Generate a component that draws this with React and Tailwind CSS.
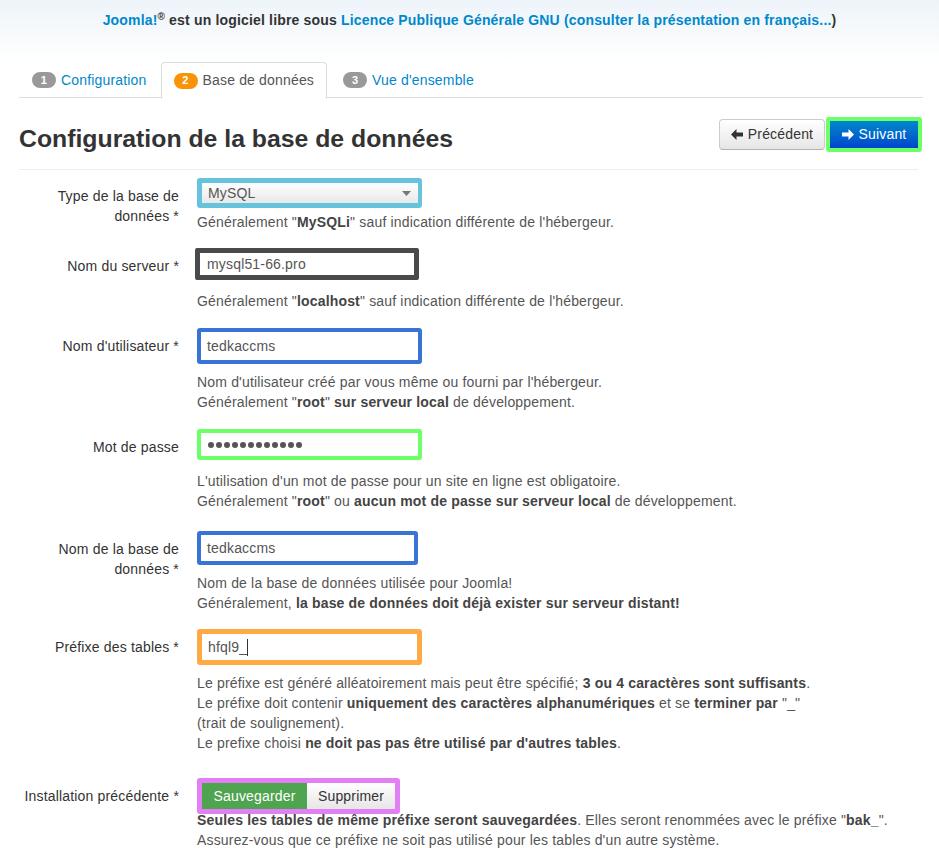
import React from "react";

const Arrow = ({ dir }) => (
  <svg width="12" height="11" viewBox="0 0 12 11" className="inline-block">
    <path
      d={dir === "left" ? "M0 5.5 L5.5 0 V3.5 H12 V7.5 H5.5 V11 Z" : "M12 5.5 L6.5 0 V3.5 H0 V7.5 H6.5 V11 Z"}
      fill="currentColor"
    />
  </svg>
);

function Row({ rowCls, label, children, help, helpCls }) {
  return (
    <div className={"flex " + rowCls}>
      <div className="w-[160px] shrink-0 ml-[19px] text-right leading-[20px] pt-[8px] text-[#333]">{label}</div>
      <div className="ml-[18px] flex-1">
        {children}
        <div className={"text-[#555] leading-[20px] " + helpCls}>{help}</div>
      </div>
    </div>
  );
}

const B = ({ children }) => <b className="font-bold text-[#444]">{children}</b>;

export default function App() {
  return (
    <div className="w-[939px] min-h-[848px] bg-white text-[14px] tracking-[0.17px] font-['Liberation_Sans',Arial,sans-serif] text-[#333] overflow-hidden">
      {/* banner */}
      <div className="h-[62px] bg-gradient-to-b from-[#edf4fa] to-white text-center pt-[10px] leading-[20px] font-bold">
        <span className="text-[#0088cc]">Joomla!</span>
        <sup className="text-[10px]">®</sup> est un logiciel libre sous{" "}
        <span className="text-[#0088cc]">Licence Publique Générale GNU (consulter la présentation en français...</span>)
      </div>

      {/* tabs */}
      <div className="ml-[19px] w-[904px] flex border-b border-[#ddd] h-[36px]">
        <div className="flex items-center pl-[13px] pr-[12px] mr-[2px] h-[36px]">
          <span className="bg-[#999] text-white text-[11px] font-bold rounded-[9px] h-[16px] w-[24px] flex items-center justify-center mr-[5px]">1</span>
          <span className="text-[#0088cc]">Configuration</span>
        </div>
        <div className="flex items-center px-[12px] h-[37px] border border-[#ddd] border-b-white bg-white rounded-t-[4px] mr-[2px]">
          <span className="bg-[#f89406] text-white text-[11px] font-bold rounded-[9px] h-[16px] w-[24px] flex items-center justify-center mr-[5px]">2</span>
          <span className="text-[#555]">Base de données</span>
        </div>
        <div className="flex items-center px-[14px] h-[36px]">
          <span className="bg-[#999] text-white text-[11px] font-bold rounded-[9px] h-[16px] w-[24px] flex items-center justify-center mr-[5px]">3</span>
          <span className="text-[#0088cc]">Vue d'ensemble</span>
        </div>
      </div>

      {/* heading */}
      <div className="ml-[19px] w-[903px] flex items-center justify-between mt-[18px] h-[36px]">
        <h3 className="text-[24.8px] tracking-normal font-bold text-[#333] leading-[36px] mt-[9px]">Configuration de la base de données</h3>
        <div className="flex items-center">
          <div className="h-[31px] w-[106px] flex items-center justify-center gap-[5px] border border-[#ccc] border-b-[#b3b3b3] rounded-[4px] bg-gradient-to-b from-white to-[#e6e6e6] text-[#333] mr-[1px]">
            <Arrow dir="left" />
            <span>Précédent</span>
          </div>
          <div className="border-[4px] border-[#6cff66] rounded-[3px] w-[96px] h-[35px]">
            <div className="h-full w-full flex items-center justify-center gap-[5px] bg-gradient-to-b from-[#0088cc] to-[#0044cc] text-white">
              <Arrow dir="right" />
              <span>Suivant</span>
            </div>
          </div>
        </div>
      </div>
      <div className="ml-[19px] w-[899px] border-t border-[#eee] mt-[17px]" />

      {/* form */}
      <Row
        rowCls="mt-[8px]"
        label="Type de la base de données *"
        helpCls="mt-[4px]"
        help={<>Généralement "<B>MySQLi</B>" sauf indication différente de l'hébergeur.</>}
      >
        <div className="w-[225px] h-[30px] border-[5px] border-r-[4px] border-[#65c3dc] rounded-[3px]">
          <div className="h-full w-full bg-gradient-to-b from-white to-[#e8e8e8] flex items-center justify-between pl-[6px] pr-[7px] text-[#555]">
            <span>MySQL</span>
            <svg width="9" height="5" viewBox="0 0 9 5"><path d="M0 0 H9 L4.5 5 Z" fill="#777" /></svg>
          </div>
        </div>
      </Row>

      <Row
        rowCls="mt-[16px]"
        label="Nom du serveur *"
        helpCls="mt-[11px]"
        help={<>Généralement "<B>localhost</B>" sauf indication différente de l'hébergeur.</>}
      >
        <div className="w-[224px] h-[32px] border-[5px] border-[#4a4a4a] rounded-[2px] -ml-[2px] bg-white flex items-center pl-[7px] text-[#555]">
          mysql51-66.pro
        </div>
      </Row>

      <Row
        rowCls="mt-[17px]"
        label="Nom d'utilisateur *"
        helpCls="mt-[8px]"
        help={
          <>
            Nom d'utilisateur créé par vous même ou fourni par l'hébergeur.
            <br />
            Généralement "<B>root</B>" <B>sur serveur local</B> de développement.
          </>
        }
      >
        <div className="w-[225px] h-[36px] border-[4px] border-[#3a73d6] rounded-[3px] bg-white flex items-center pl-[6px] text-[#555]">
          tedkaccms
        </div>
      </Row>

      <Row
        rowCls="mt-[17px]"
        label="Mot de passe"
        helpCls="mt-[11px]"
        help={
          <>
            L'utilisation d'un mot de passe pour un site en ligne est obligatoire.
            <br />
            Généralement "<B>root</B>" ou <B>aucun mot de passe sur serveur local</B> de développement.
          </>
        }
      >
        <div className="w-[225px] h-[31px] border-[4px] border-[#6cff66] rounded-[3px] bg-white flex items-center gap-[2px] pl-[7px]">
          {Array.from({ length: 12 }).map((_, i) => (
            <span key={i} className="w-[6px] h-[6px] rounded-full bg-[#555]" />
          ))}
        </div>
      </Row>

      <Row
        rowCls="mt-[20px]"
        label="Nom de la base de données *"
        helpCls="mt-[8px]"
        help={
          <>
            Nom de la base de données utilisée pour Joomla!
            <br />
            Généralement, <B>la base de données doit déjà exister sur serveur distant!</B>
          </>
        }
      >
        <div className="w-[221px] h-[34px] border-[4px] border-[#3a73d6] rounded-[3px] bg-white flex items-center pl-[6px] text-[#555]">
          tedkaccms
        </div>
      </Row>

      <Row
        rowCls="mt-[16px]"
        label="Préfixe des tables *"
        helpCls="mt-[8px]"
        help={
          <>
            Le préfixe est généré alléatoirement mais peut être spécifié; <B>3 ou 4 caractères sont suffisants</B>.
            <br />
            Le préfixe doit contenir <B>uniquement des caractères alphanumériques</B> et se <B>terminer par</B> "_"
            <br />
            (trait de soulignement).
            <br />
            Le prefixe choisi <B>ne doit pas pas être utilisé par d'autres tables</B>.
          </>
        }
      >
        <div className="w-[225px] h-[36px] border-[5px] border-[#ffaa45] rounded-[3px] bg-white flex items-center pl-[6px] text-[#555]">
          <span>hfql9_</span>
          <span className="w-[1px] h-[17px] bg-[#333]" />
        </div>
      </Row>

      <Row
        rowCls="mt-[25px]"
        label="Installation précédente *"
        helpCls="-mt-[4px]"
        help={
          <>
            <B>Seules les tables de même préfixe seront sauvegardées</B>. Elles seront renommées avec le préfixe "<B>bak_</B>".
            <br />
            Assurez-vous que ce préfixe ne soit pas utilisé pour les tables d'un autre système.
          </>
        }
      >
        <div className="w-[203px] h-[36px] border-[5px] border-[#e37ff4] rounded-[3px] flex">
          <div className="w-[105px] h-full bg-[#4fa44f] text-white flex items-center justify-center">Sauvegarder</div>
          <div className="flex-1 h-full bg-gradient-to-b from-white to-[#e6e6e6] text-[#333] flex items-center justify-center">Supprimer</div>
        </div>
      </Row>
    </div>
  );
}
